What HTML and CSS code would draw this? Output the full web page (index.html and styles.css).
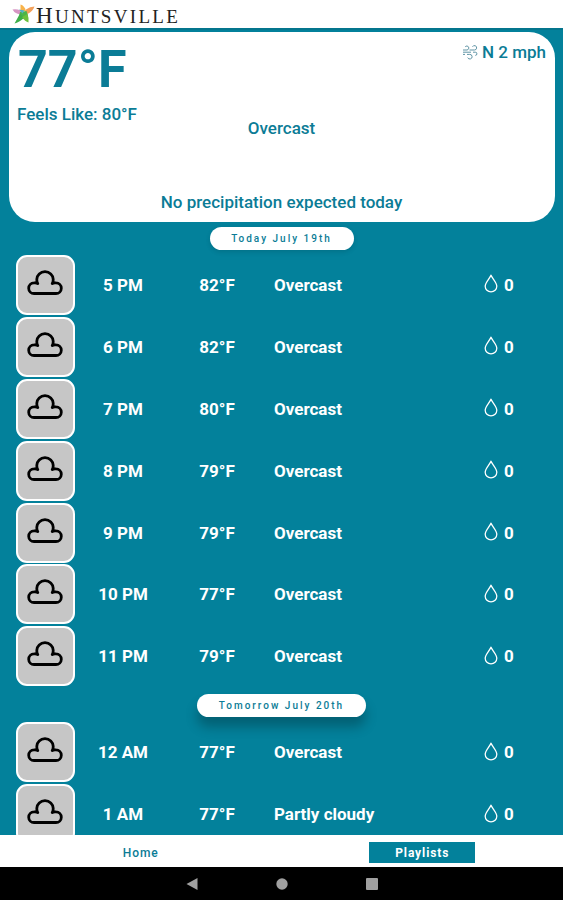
FILE: index.html
```html
<!DOCTYPE html>
<html lang="en">
<head>
    <meta charset="UTF-8">
    <title>Huntsville Weather</title>
    <link rel="stylesheet" href="styles.css">
</head>
<body>
    <!-- shared icons -->
    <svg class="sprites">
        <symbol id="cloud" viewBox="0 0 36 26">
            <path d="M7 23.5H29A5.3 5.3 0 0 0 29 12.9Q27 12.5 25.2 13.6Q26.4 11.6 26.2 9.3A8.2 7.6 0 0 0 9.8 9.3Q9.6 11.6 10.8 13.6Q9 12.5 7 12.9A5.3 5.3 0 0 0 7 23.5Z" fill="none" stroke="#000" stroke-width="2.8" stroke-linejoin="round"/>
        </symbol>
        <symbol id="drop" viewBox="0 0 14 19">
            <path d="M7 1.2C5.6 4.6 1.2 8.5 1.2 12.2A5.8 5.6 0 0 0 12.8 12.2C12.8 8.5 8.4 4.6 7 1.2Z" fill="none" stroke="#fff" stroke-width="1.3" stroke-linejoin="round"/>
        </symbol>
    </svg>

    <header class="header">
        <svg class="star" viewBox="0 0 23 21">
            <path d="M8.5 7.5L8.5 0.5Q12.5 1.5 14 7Z" fill="#f8b34a"/>
            <path d="M13 8L14 5.5Q18 2.5 22.5 2.5Q21 7 15.5 10Z" fill="#f3a05a"/>
            <path d="M9 10.5L9 6.5Q4 4.5 0.5 5.5Q3 10 9 10.5Z" fill="#d795c4"/>
            <path d="M8 8L14.5 7L16 11.5L11 15L7 13Z" fill="#4cb548"/>
            <path d="M8 9.5L12.5 13.5Q7 18.5 2.5 19.5Q4.5 16 8 9.5Z" fill="#3eae49"/>
            <path d="M10 13L15.5 10Q17 14 16.5 18.5Q13 17.5 10 13Z" fill="#6cc03c"/>
            <path d="M7 5.5L12.5 6.5L10.5 9.5Z" fill="#4fb3c4"/>
        </svg>
        <div class="brand"><span class="brand-cap">H</span>UNTSVILLE</div>
    </header>

    <main class="forecast">
        <section class="current">
            <div class="current-top">
                <div class="temp-now">77°F</div>
                <div class="wind">
                    <svg class="wind-icon" viewBox="0 0 16 16">
                        <path d="M1 6H5A2 2 0 1 0 3.2 2.8M7.5 6H12.5A2.2 2.2 0 1 0 10.5 2.8M1 8.2H9M11 8.2H13.3A1.6 1.6 0 0 1 13.3 11.4M1 10.4H3M5 10.4H7.7A2.3 2.3 0 1 1 5.7 13.6" fill="none" stroke="#5f94a5" stroke-width="1"/>
                    </svg>
                    <span>N 2 mph</span>
                </div>
            </div>
            <div class="feels">Feels Like: 80°F</div>
            <div class="condition">Overcast</div>
            <div class="precip">No precipitation expected today</div>
        </section>

        <div class="day today">Today July 19th</div>
        <div class="hours">
            <div class="hour">
                <div class="tile"><svg class="cloud"><use href="#cloud"/></svg></div>
                <div class="time">5 PM</div>
                <div class="temp">82°F</div>
                <div class="sky">Overcast</div>
                <div class="rain"><svg class="drop"><use href="#drop"/></svg>0</div>
            </div>
            <div class="hour">
                <div class="tile"><svg class="cloud"><use href="#cloud"/></svg></div>
                <div class="time">6 PM</div>
                <div class="temp">82°F</div>
                <div class="sky">Overcast</div>
                <div class="rain"><svg class="drop"><use href="#drop"/></svg>0</div>
            </div>
            <div class="hour">
                <div class="tile"><svg class="cloud"><use href="#cloud"/></svg></div>
                <div class="time">7 PM</div>
                <div class="temp">80°F</div>
                <div class="sky">Overcast</div>
                <div class="rain"><svg class="drop"><use href="#drop"/></svg>0</div>
            </div>
            <div class="hour">
                <div class="tile"><svg class="cloud"><use href="#cloud"/></svg></div>
                <div class="time">8 PM</div>
                <div class="temp">79°F</div>
                <div class="sky">Overcast</div>
                <div class="rain"><svg class="drop"><use href="#drop"/></svg>0</div>
            </div>
            <div class="hour">
                <div class="tile"><svg class="cloud"><use href="#cloud"/></svg></div>
                <div class="time">9 PM</div>
                <div class="temp">79°F</div>
                <div class="sky">Overcast</div>
                <div class="rain"><svg class="drop"><use href="#drop"/></svg>0</div>
            </div>
            <div class="hour">
                <div class="tile"><svg class="cloud"><use href="#cloud"/></svg></div>
                <div class="time">10 PM</div>
                <div class="temp">77°F</div>
                <div class="sky">Overcast</div>
                <div class="rain"><svg class="drop"><use href="#drop"/></svg>0</div>
            </div>
            <div class="hour">
                <div class="tile"><svg class="cloud"><use href="#cloud"/></svg></div>
                <div class="time">11 PM</div>
                <div class="temp">79°F</div>
                <div class="sky">Overcast</div>
                <div class="rain"><svg class="drop"><use href="#drop"/></svg>0</div>
            </div>
        </div>

        <div class="day tomorrow">Tomorrow July 20th</div>
        <div class="hours">
            <div class="hour">
                <div class="tile"><svg class="cloud"><use href="#cloud"/></svg></div>
                <div class="time">12 AM</div>
                <div class="temp">77°F</div>
                <div class="sky">Overcast</div>
                <div class="rain"><svg class="drop"><use href="#drop"/></svg>0</div>
            </div>
            <div class="hour">
                <div class="tile"><svg class="cloud"><use href="#cloud"/></svg></div>
                <div class="time">1 AM</div>
                <div class="temp">77°F</div>
                <div class="sky">Partly cloudy</div>
                <div class="rain"><svg class="drop"><use href="#drop"/></svg>0</div>
            </div>
        </div>
    </main>

    <nav class="tabs">
        <div class="tab">Home</div>
        <div class="tab"><span class="active">Playlists</span></div>
    </nav>

    <!-- android system buttons -->
    <footer class="system">
        <svg class="key" viewBox="0 0 12 12"><path d="M0.5 6L11.5 0V12Z" fill="#a0a0a0"/></svg>
        <svg class="key" viewBox="0 0 12 12"><circle cx="6" cy="6" r="5.7" fill="#a0a0a0"/></svg>
        <svg class="key" viewBox="0 0 12 12"><rect width="12" height="12" rx="1" fill="#a0a0a0"/></svg>
    </footer>
</body>
</html>
```
FILE: styles.css
```css
* {
    margin: 0;
    padding: 0;
    box-sizing: border-box;
}

body {
    height: 900px;
    display: flex;
    flex-direction: column;
    background: #03819b;
    font-family: Roboto, sans-serif;
    overflow: hidden;
}

svg {
    display: block;
}

.sprites {
    display: none;
}

.header {
    height: 28px;
    flex: none;
    display: flex;
    padding: 4px 0 0 12px;
    background: #fff;
}

.star {
    width: 23px;
    height: 21px;
}

.brand {
    padding-left: 1px;
    font-family: "Liberation Serif", serif;
    font-size: 19px;
    line-height: 24px;
    letter-spacing: 2.3px;
    color: #222;
}

.brand-cap {
    font-size: 23px;
}

.forecast {
    flex: 1;
    min-height: 0;
    overflow: hidden;
    border-top: 2px solid #04758d;
    padding-top: 2px;
}

.current {
    height: 190px;
    margin: 0 8px 0 9px;
    padding: 7px 9px 0 8px;
    border-radius: 26px;
    background: #fff;
    color: #0b7c96;
    font-size: 17px;
    font-weight: 500;
    line-height: 20px;
}

.current-top {
    height: 65px;
    display: flex;
    justify-content: space-between;
}

.temp-now {
    padding-left: 1px;
    font-size: 52px;
    font-weight: bold;
    line-height: 62px;
}

.wind {
    display: flex;
    gap: 4px;
    height: 26px;
    align-items: center;
}

.wind-icon {
    width: 16px;
    height: 16px;
}

.feels {
    height: 14px;
    line-height: 20px;
}

.condition,
.precip {
    text-align: center;
}

.precip {
    margin-top: 54px;
}

.day {
    width: 144px;
    height: 23px;
    margin: 5px auto 4px;
    border-radius: 12px;
    background: #fff;
    color: #0b7c96;
    font-size: 10px;
    font-weight: 500;
    line-height: 23px;
    letter-spacing: 2px;
    text-align: center;
    box-shadow: 0 2px 5px rgba(0, 0, 0, 0.12);
}

.tomorrow {
    width: 169px;
    margin-top: 7px;
    box-shadow: 0 10px 12px rgba(0, 0, 0, 0.25);
}

.hour {
    height: 61.9px;
    display: grid;
    grid-template-columns: 59px 96px 92px 11px 210px 1fr;
    align-items: center;
    padding-left: 16px;
    color: #fff;
    font-size: 17px;
    font-weight: bold;
}

.tile {
    width: 59px;
    height: 60px;
    display: flex;
    justify-content: center;
    align-items: center;
    border: 2.5px solid #fff;
    border-radius: 11px;
    background: #c6c6c6;
}

.cloud {
    width: 36px;
    height: 26px;
    margin: 0 1px 4px 0;
}

.time,
.temp {
    text-align: center;
}

.sky {
    grid-column: 5;
}

.rain {
    display: flex;
    align-items: center;
    gap: 6px;
}

.drop {
    width: 14px;
    height: 19px;
    margin-bottom: 2px;
}

.tabs {
    height: 32px;
    flex: none;
    display: flex;
    background: #fff;
}

.tab {
    flex: 1;
    display: flex;
    justify-content: center;
    align-items: center;
    padding-top: 3px;
    color: #0b7c96;
    font-size: 12px;
    font-weight: 500;
    letter-spacing: 0.9px;
}

.active {
    width: 106px;
    height: 21px;
    background: #03819b;
    color: #fff;
    font-weight: bold;
    line-height: 22px;
    text-align: center;
}

.system {
    height: 33px;
    flex: none;
    display: flex;
    justify-content: center;
    align-items: center;
    gap: 78px;
    background: #000;
}

.key {
    width: 12px;
    height: 12px;
}
```
